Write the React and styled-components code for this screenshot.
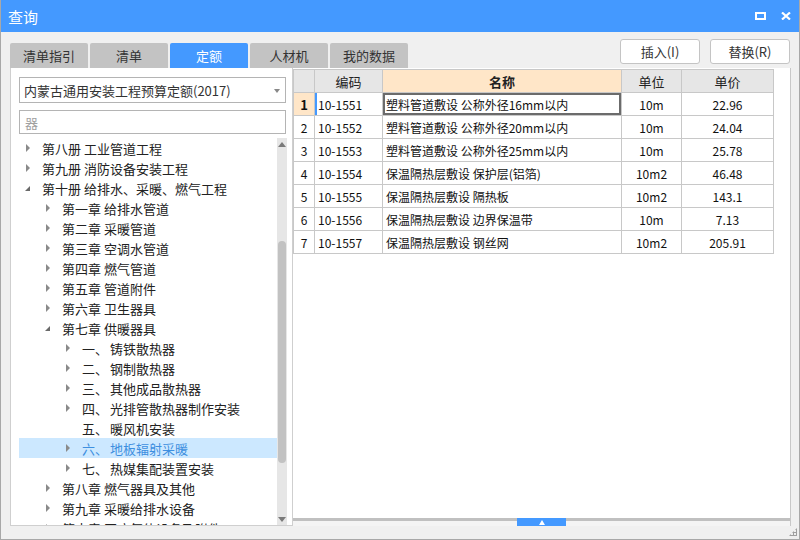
import React from 'react';
import styled, { createGlobalStyle } from 'styled-components';

const GlobalStyle = createGlobalStyle`
  html, body {
    margin: 0;
    padding: 0;
    background: #f0f0f0;
  }
  * {
    box-sizing: border-box;
  }
`;

const FONT = `"Microsoft YaHei", "Noto Sans CJK SC", "Noto Sans", sans-serif`;

const Window = styled.div`
  width: 800px;
  height: 540px;
  display: flex;
  flex-direction: column;
  background: #f0f0f0;
  border: 1px solid #a8a8a8;
  border-top: none;
  font-family: ${FONT};
  color: #222;
  position: relative;
  overflow: hidden;
`;

const TitleBar = styled.div`
  height: 32px;
  flex: none;
  background: #4499ff;
  display: flex;
  align-items: center;
  padding: 0 0 0 7px;
  color: #fff;
  font-size: 15px;
`;

const TitleText = styled.div`
  flex: 1;
`;

const TitleButton = styled.div`
  width: 26px;
  height: 32px;
  display: flex;
  align-items: center;
  justify-content: center;
`;

const MaxIcon = styled.div`
  width: 11px;
  height: 8px;
  border: 2px solid #fff;
`;

const TopRow = styled.div`
  height: 36px;
  flex: none;
  display: flex;
  align-items: flex-start;
  padding: 0 9px 0 9px;
`;

const Tabs = styled.div`
  display: flex;
  gap: 2px;
  margin-top: 11px;
  flex: 1;
`;

const Tab = styled.div`
  width: 78px;
  height: 25px;
  border-radius: 2px 2px 0 0;
  background: ${(p) => (p.active ? '#4499ff' : '#c3c3c3')};
  color: ${(p) => (p.active ? '#fff' : '#333')};
  font-size: 13px;
  display: flex;
  align-items: center;
  justify-content: center;
`;

const Buttons = styled.div`
  display: flex;
  gap: 10px;
  margin-top: 7px;
`;

const Button = styled.div`
  width: 80px;
  height: 25px;
  background: #fff;
  border: 1px solid #c4c4c4;
  border-radius: 3px;
  font-size: 13px;
  color: #333;
  display: flex;
  align-items: center;
  justify-content: center;
`;

const Main = styled.div`
  height: 458px;
  flex: none;
  display: flex;
  padding-left: 9px;
`;

const LeftPanel = styled.div`
  width: 283px;
  background: #fff;
  border: 1px solid #cfcfcf;
  border-top: none;
  display: flex;
  flex-direction: column;
  padding: 9px 5px 0 8px;
`;

const Select = styled.div`
  height: 26px;
  width: 267px;
  border: 1px solid #b4b4b4;
  display: flex;
  align-items: center;
  padding: 0 5px 0 4px;
  font-size: 13px;
  color: #333;
  justify-content: space-between;
`;

const Caret = styled.div`
  width: 0;
  height: 0;
  border-left: 3px solid transparent;
  border-right: 3px solid transparent;
  border-top: 4px solid #888;
  margin-top: 1px;
`;

const SearchBox = styled.div`
  margin-top: 7px;
  height: 24px;
  width: 267px;
  border: 1px solid #b4b4b4;
  display: flex;
  align-items: center;
  padding-left: 5px;
  font-size: 13px;
  color: #a0a0a0;
`;

const TreeArea = styled.div`
  margin-top: 4px;
  flex: 1;
  display: flex;
  min-height: 0;
  width: 268px;
`;

const TreeList = styled.div`
  flex: 1;
  overflow: hidden;
`;

const TreeRow = styled.div`
  height: 20px;
  display: flex;
  align-items: center;
  font-size: 13px;
  white-space: nowrap;
  padding-left: ${(p) => (p.level - 1) * 20}px;
  background: ${(p) => (p.selected ? '#cce8ff' : 'transparent')};
  color: ${(p) => (p.selected ? '#3d8fe0' : '#222')};
`;

const Toggle = styled.div`
  width: 23px;
  height: 20px;
  flex: none;
  position: relative;
`;

const Collapsed = styled.div`
  position: absolute;
  left: 7px;
  top: 6px;
  width: 0;
  height: 0;
  border-top: 4px solid transparent;
  border-bottom: 4px solid transparent;
  border-left: 4px solid #8a8a8a;
`;

const Expanded = styled.div`
  position: absolute;
  left: 6px;
  top: 8px;
  width: 0;
  height: 0;
  border-left: 5px solid transparent;
  border-bottom: 5px solid #6a6a6a;
`;

const Num = styled.span`
  display: inline-block;
  width: 28px;
`;

const Scrollbar = styled.div`
  width: 10px;
  flex: none;
  background: #e6e6e6;
  display: flex;
  flex-direction: column;
  align-items: center;
  padding-top: 4px;
`;

const UpArrow = styled.div`
  width: 0;
  height: 0;
  border-left: 4px solid transparent;
  border-right: 4px solid transparent;
  border-bottom: 5px solid #7a7a7a;
  flex: none;
`;

const DownArrow = styled.div`
  width: 0;
  height: 0;
  border-left: 4px solid transparent;
  border-right: 4px solid transparent;
  border-top: 5px solid #7a7a7a;
  flex: none;
  margin-bottom: 3px;
`;

const Thumb = styled.div`
  width: 8px;
  height: 222px;
  margin-top: 94px;
  background: #c2c2c2;
  border-radius: 4px;
  flex: none;
`;

const Spacer = styled.div`
  flex: 1;
`;

const RightPanel = styled.div`
  width: 498px;
  background: #fff;
  border-right: 1px solid #c8c8c8;
  display: flex;
  flex-direction: column;
  padding-top: 1px;
`;

const TableWrap = styled.div`
  flex: 1;
`;

const Table = styled.table`
  border-collapse: collapse;
  table-layout: fixed;
  width: 481px;
  font-size: 12px;
  font-family: "Noto Sans CJK SC", "DejaVu Sans", sans-serif;
`;

const Th = styled.th`
  height: 23px;
  font-weight: ${(p) => (p.hl ? 700 : 400)};
  background: ${(p) => (p.hl ? '#ffe6c8' : '#e6e6e6')};
  border: 1px solid #c8c8c8;
  font-size: 13px;
  color: #222;
  padding: 0;
`;

const Td = styled.td`
  height: 23px;
  border: 1px solid #c8c8c8;
  padding: 0 0 0 ${(p) => (p.align === 'left' ? '3px' : '0')};
  text-align: ${(p) => p.align || 'center'};
  white-space: nowrap;
  overflow: hidden;
  color: #111;
  background: ${(p) => (p.rowHead && p.current ? '#ffe6c8' : '#fff')};
  font-weight: ${(p) => (p.rowHead && p.current ? 700 : 400)};
  font-size: ${(p) => (p.rowHead && p.current ? '13px' : '12px')};
  box-shadow: ${(p) =>
    p.focus ? 'inset 0 0 0 2px #6b6b6b' : p.mark ? 'inset 2px 0 0 #4499ff' : 'none'};
`;

const BottomBar = styled.div`
  height: 8px;
  flex: none;
  display: flex;
  justify-content: center;
  background: linear-gradient(#c0c0c0 0, #c0c0c0 3px, #f4f4f4 3px);
`;

const Handle = styled.div`
  width: 49px;
  height: 8px;
  background: #4499ff;
  display: flex;
  align-items: center;
  justify-content: center;
`;

const HandleArrow = styled.div`
  width: 0;
  height: 0;
  border-left: 3px solid transparent;
  border-right: 3px solid transparent;
  border-bottom: 5px solid #fff;
`;

const Grip = styled.div`
  position: absolute;
  right: 2px;
  bottom: 3px;
  width: 8px;
  height: 8px;
  background:
    radial-gradient(circle, #a0a0a0 1px, transparent 1.2px) 0 0 / 3px 3px;
  clip-path: polygon(100% 0, 100% 100%, 0 100%);
`;

const tree = [
  { level: 1, t: '第八册 工业管道工程', s: 'c' },
  { level: 1, t: '第九册 消防设备安装工程', s: 'c' },
  { level: 1, t: '第十册 给排水、采暖、燃气工程', s: 'e' },
  { level: 2, t: '第一章 给排水管道', s: 'c' },
  { level: 2, t: '第二章 采暖管道', s: 'c' },
  { level: 2, t: '第三章 空调水管道', s: 'c' },
  { level: 2, t: '第四章 燃气管道', s: 'c' },
  { level: 2, t: '第五章 管道附件', s: 'c' },
  { level: 2, t: '第六章 卫生器具', s: 'c' },
  { level: 2, t: '第七章 供暖器具', s: 'e' },
  { level: 3, n: '一、', t: '铸铁散热器', s: 'c' },
  { level: 3, n: '二、', t: '钢制散热器', s: 'c' },
  { level: 3, n: '三、', t: '其他成品散热器', s: 'c' },
  { level: 3, n: '四、', t: '光排管散热器制作安装', s: 'c' },
  { level: 3, n: '五、', t: '暖风机安装', s: '' },
  { level: 3, n: '六、', t: '地板辐射采暖', s: 'c', selected: true },
  { level: 3, n: '七、', t: '热媒集配装置安装', s: 'c' },
  { level: 2, t: '第八章 燃气器具及其他', s: 'c' },
  { level: 2, t: '第九章 采暖给排水设备', s: 'c' },
  { level: 2, t: '第十章 医疗气体设备及附件', s: 'c' },
];

const rows = [
  ['10-1551', '塑料管道敷设 公称外径16mm以内', '10m', '22.96'],
  ['10-1552', '塑料管道敷设 公称外径20mm以内', '10m', '24.04'],
  ['10-1553', '塑料管道敷设 公称外径25mm以内', '10m', '25.78'],
  ['10-1554', '保温隔热层敷设 保护层(铝箔)', '10m2', '46.48'],
  ['10-1555', '保温隔热层敷设 隔热板', '10m2', '143.1'],
  ['10-1556', '保温隔热层敷设 边界保温带', '10m', '7.13'],
  ['10-1557', '保温隔热层敷设 钢丝网', '10m2', '205.91'],
];

const tabs = ['清单指引', '清单', '定额', '人材机', '我的数据'];

export default function App() {
  return (
    <>
      <GlobalStyle />
      <Window>
        <TitleBar>
          <TitleText>查询</TitleText>
          <TitleButton>
            <MaxIcon />
          </TitleButton>
          <TitleButton>
            <svg width="10" height="8" viewBox="0 0 10 8">
              <path d="M1 0.5 L9 7.5 M9 0.5 L1 7.5" stroke="#fff" strokeWidth="2.2" />
            </svg>
          </TitleButton>
        </TitleBar>

        <TopRow>
          <Tabs>
            {tabs.map((t) => (
              <Tab key={t} active={t === '定额'}>
                {t}
              </Tab>
            ))}
          </Tabs>
          <Buttons>
            <Button>插入(I)</Button>
            <Button>替换(R)</Button>
          </Buttons>
        </TopRow>

        <Main>
          <LeftPanel>
            <Select>
              <span>内蒙古通用安装工程预算定额(2017)</span>
              <Caret />
            </Select>
            <SearchBox>器</SearchBox>
            <TreeArea>
              <TreeList>
                {tree.map((r, i) => (
                  <TreeRow key={i} level={r.level} selected={r.selected}>
                    <Toggle>
                      {r.s === 'c' && <Collapsed />}
                      {r.s === 'e' && <Expanded />}
                    </Toggle>
                    {r.n && <Num>{r.n}</Num>}
                    {r.t}
                  </TreeRow>
                ))}
              </TreeList>
              <Scrollbar>
                <UpArrow />
                <Thumb />
                <Spacer />
                <DownArrow />
              </Scrollbar>
            </TreeArea>
          </LeftPanel>

          <RightPanel>
            <TableWrap>
              <Table>
                <colgroup>
                  <col style={{ width: 21 }} />
                  <col style={{ width: 68 }} />
                  <col style={{ width: 239 }} />
                  <col style={{ width: 60 }} />
                  <col style={{ width: 92 }} />
                </colgroup>
                <thead>
                  <tr>
                    <Th />
                    <Th>编码</Th>
                    <Th hl>名称</Th>
                    <Th>单位</Th>
                    <Th>单价</Th>
                  </tr>
                </thead>
                <tbody>
                  {rows.map((r, i) => (
                    <tr key={r[0]}>
                      <Td rowHead current={i === 0}>
                        {i + 1}
                      </Td>
                      <Td align="left" mark={i === 0}>
                        {r[0]}
                      </Td>
                      <Td align="left" focus={i === 0}>
                        {r[1]}
                      </Td>
                      <Td>{r[2]}</Td>
                      <Td>{r[3]}</Td>
                    </tr>
                  ))}
                </tbody>
              </Table>
            </TableWrap>
            <BottomBar>
              <Handle>
                <HandleArrow />
              </Handle>
            </BottomBar>
          </RightPanel>
        </Main>
        <Grip />
      </Window>
    </>
  );
}
